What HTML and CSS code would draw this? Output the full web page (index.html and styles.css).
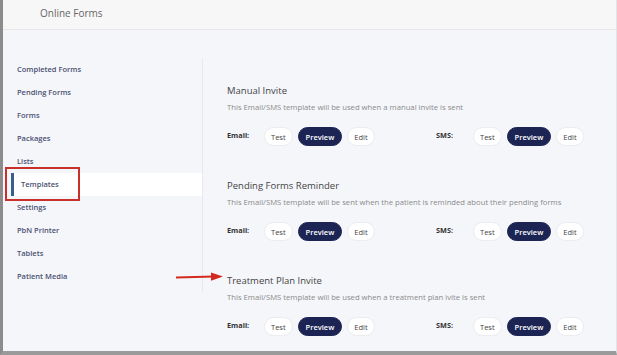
FILE: index.html
```html
<!DOCTYPE html>
<html lang="en">
<head>
    <meta charset="UTF-8">
    <meta name="viewport" content="width=device-width, initial-scale=1.0">
    <title>Online Forms</title>
    <link rel="stylesheet" href="styles.css">
</head>
<body>
    <div class="frame">
        <div class="header">Online Forms</div>
        <div class="page">
            <div class="sidebar">
                <div class="nav">
                    <div class="nav-item">Completed Forms</div>
                    <div class="nav-item">Pending Forms</div>
                    <div class="nav-item">Forms</div>
                    <div class="nav-item">Packages</div>
                    <div class="nav-item">Lists</div>
                    <div class="nav-item active">Templates</div>
                    <div class="nav-item">Settings</div>
                    <div class="nav-item">PbN Printer</div>
                    <div class="nav-item">Tablets</div>
                    <div class="nav-item">Patient Media</div>
                </div>
            </div>
            <div class="content">
                <div class="section">
                    <div class="title">Manual Invite</div>
                    <div class="desc">This Email/SMS template will be used when a manual invite is sent</div>
                    <div class="row">
                        <div class="group">
                            <span class="label">Email:</span>
                            <button class="btn">Test</button>
                            <button class="btn dark">Preview</button>
                            <button class="btn">Edit</button>
                        </div>
                        <div class="group">
                            <span class="label">SMS:</span>
                            <button class="btn">Test</button>
                            <button class="btn dark">Preview</button>
                            <button class="btn">Edit</button>
                        </div>
                    </div>
                </div>
                <div class="section">
                    <div class="title">Pending Forms Reminder</div>
                    <div class="desc">This Email/SMS template will be sent when the patient is reminded about their pending forms</div>
                    <div class="row">
                        <div class="group">
                            <span class="label">Email:</span>
                            <button class="btn">Test</button>
                            <button class="btn dark">Preview</button>
                            <button class="btn">Edit</button>
                        </div>
                        <div class="group">
                            <span class="label">SMS:</span>
                            <button class="btn">Test</button>
                            <button class="btn dark">Preview</button>
                            <button class="btn">Edit</button>
                        </div>
                    </div>
                </div>
                <div class="section">
                    <div class="title">Treatment Plan Invite</div>
                    <div class="desc">This Email/SMS template will be used when a treatment plan ivite is sent</div>
                    <div class="row">
                        <div class="group">
                            <span class="label">Email:</span>
                            <button class="btn">Test</button>
                            <button class="btn dark">Preview</button>
                            <button class="btn">Edit</button>
                        </div>
                        <div class="group">
                            <span class="label">SMS:</span>
                            <button class="btn">Test</button>
                            <button class="btn dark">Preview</button>
                            <button class="btn">Edit</button>
                        </div>
                    </div>
                </div>
            </div>
        </div>
        <!-- annotations -->
        <div class="mark-box"></div>
        <svg class="mark-arrow" width="50" height="10" viewBox="0 0 50 10">
            <path d="M0 5.5 L38 4.6" stroke="#d32a20" stroke-width="2" fill="none"/>
            <path d="M35 0.5 L47 4.5 L35 8.8 Z" fill="#d32a20"/>
        </svg>
    </div>
</body>
</html>
```

FILE: styles.css
```css
body {
    margin: 0;
    font-family: "Open Sans", Arial, sans-serif;
    background: #f5f6fa;
}
.frame {
    position: relative;
    width: 617px;
    height: 355px;
    box-sizing: border-box;
    border-left: 3px solid #8c8c8c;
    border-bottom: 4px solid #9a9a9a;
    border-right: 1px solid #e4e4e8;
    background: #f5f6fa;
    overflow: hidden;
}
.header {
    height: 30px;
    box-sizing: border-box;
    background: #f7f7f7;
    border-bottom: 1px solid #e6e6e6;
    padding-left: 37px;
    line-height: 27px;
    font-size: 10px;
    color: #666;
}
.page {
    display: flex;
}
.sidebar {
    width: 200px;
    flex-shrink: 0;
    padding-top: 28px;
}
.nav {
    border-right: 1px solid #e7e9ef;
    padding-bottom: 4px;
}
.nav-item {
    height: 23px;
    line-height: 23px;
    padding-left: 14px;
    font-size: 7.5px;
    font-weight: 600;
    color: #4b5172;
}
.nav-item.active {
    margin-left: 8px;
    padding-left: 7px;
    border-left: 3px solid #3b5d8f;
    background: #fff;
}
.content {
    flex: 1;
    padding: 54px 0 0 24px;
}
.section {
    margin-bottom: 33px;
}
.title {
    font-size: 9.5px;
    line-height: 14px;
    color: #444;
}
.desc {
    margin-top: 4px;
    font-size: 7.7px;
    line-height: 10px;
    color: #8a8a8a;
}
.row {
    display: flex;
    margin-top: 15px;
}
.group {
    width: 209px;
    display: flex;
    align-items: center;
    gap: 5px;
}
.label {
    width: 32px;
    font-size: 7.3px;
    font-weight: 700;
    color: #333;
    margin-top: -4px;
}
.btn {
    height: 19px;
    padding: 0 6px;
    border: 1px solid #ececf0;
    border-radius: 10px;
    background: #fff;
    font-family: "Open Sans", Arial, sans-serif;
    font-size: 7.5px;
    color: #444;
}
.btn.dark {
    background: #1b2453;
    border-color: #1b2453;
    color: #fff;
    font-weight: 600;
    padding: 0 7px;
}
.mark-box {
    position: absolute;
    left: 2px;
    top: 167px;
    width: 71px;
    height: 30px;
    border: 2px solid #c9302c;
}
.mark-arrow {
    position: absolute;
    left: 173px;
    top: 272px;
}
```
